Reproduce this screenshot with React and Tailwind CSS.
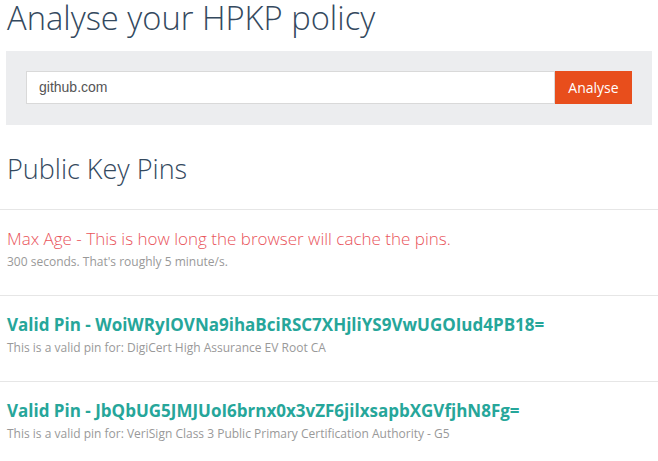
export default function App() {
  const pins = [
    {
      pin: "WoiWRyIOVNa9ihaBciRSC7XHjliYS9VwUGOIud4PB18=",
      ca: "DigiCert High Assurance EV Root CA",
    },
    {
      pin: "JbQbUG5JMJUoI6brnx0x3vZF6jilxsapbXGVfjhN8Fg=",
      ca: "VeriSign Class 3 Public Primary Certification Authority - G5",
    },
  ];
  return (
    <div className="w-[658px] h-[461px] overflow-hidden bg-white font-['Open_Sans',sans-serif]">
      <h1 className="px-[7px] text-[32.7px] leading-[36px] font-light text-[#34495e] whitespace-nowrap">
        Analyse your HPKP policy
      </h1>
      <div className="mx-[6px] mt-[15px] bg-[#ecedef] px-[20px] pt-[20px] pb-[21px] flex">
        <div className="flex-1 h-[33px] bg-white border border-[#d9d9d9] flex items-center pl-[12px] font-['Liberation_Sans',Arial,sans-serif] text-[14px] text-[#555]">
          github.com
        </div>
        <button className="h-[33px] w-[77px] bg-[#e84e1c] text-white text-[14px] flex items-center justify-center">
          Analyse
        </button>
      </div>
      <h2 className="px-[7px] mt-[28px] text-[27px] leading-[32px] font-light text-[#34495e]">
        Public Key Pins
      </h2>
      <div className="mt-[24px] border-t border-[#e6e6e6] px-[7px] pt-[17px] pb-[24px]">
        <div className="text-[17px] leading-[24px] font-light text-[#e9545b]">
          Max Age - This is how long the browser will cache the pins.
        </div>
        <div className="mt-[2px] text-[12px] leading-[18px] text-[#999]">
          300 seconds. That's roughly 5 minute/s.
        </div>
      </div>
      {pins.map((p) => (
        <div
          key={p.pin}
          className="border-t border-[#e6e6e6] px-[7px] pt-[17px] pb-[24px]"
        >
          <div className="text-[17px] leading-[24px] font-bold text-[#26a69a]">
            Valid Pin - {p.pin}
          </div>
          <div className="mt-[2px] text-[12px] leading-[18px] text-[#999]">
            This is a valid pin for: {p.ca}
          </div>
        </div>
      ))}
    </div>
  );
}
